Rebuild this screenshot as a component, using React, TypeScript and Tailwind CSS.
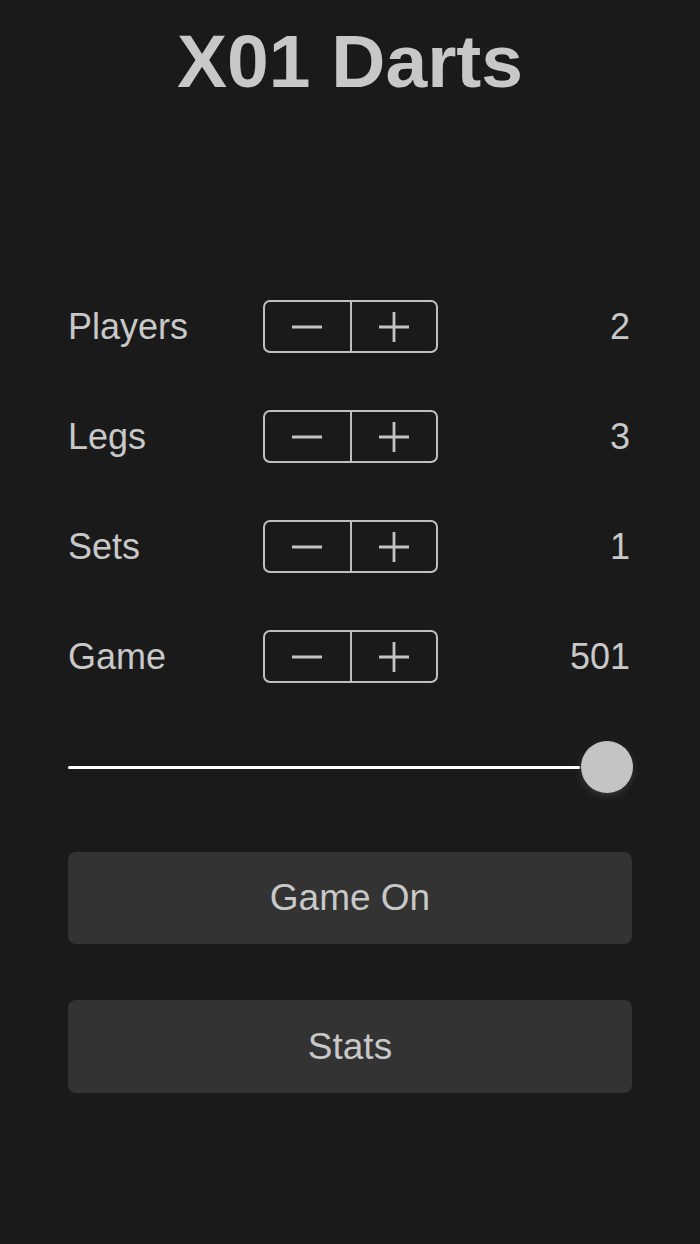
import React, { useState } from 'react';

const font = { fontFamily: '"Liberation Sans", Arial, Helvetica, sans-serif' };

const MinusIcon = () => (
  <svg width="32" height="32" viewBox="0 0 32 32" fill="none">
    <line x1="1" y1="16" x2="31" y2="16" stroke="#c4c4c4" strokeWidth="2.8" />
  </svg>
);

const PlusIcon = () => (
  <svg width="32" height="32" viewBox="0 0 32 32" fill="none">
    <line x1="1" y1="16" x2="31" y2="16" stroke="#c4c4c4" strokeWidth="2.8" />
    <line x1="16" y1="1" x2="16" y2="31" stroke="#c4c4c4" strokeWidth="2.8" />
  </svg>
);

const Stepper: React.FC<{ onDec: () => void; onInc: () => void }> = ({ onDec, onInc }) => (
  <div className="flex h-[53px] w-[175px] overflow-hidden rounded-[7px] border-2 border-[#bfbfbf]">
    <button onClick={onDec} className="flex flex-1 items-center justify-center">
      <MinusIcon />
    </button>
    <div className="w-[2px] bg-[#bfbfbf]" />
    <button onClick={onInc} className="flex flex-1 items-center justify-center">
      <PlusIcon />
    </button>
  </div>
);

const SettingRow: React.FC<{ label: string; value: number; onDec: () => void; onInc: () => void }> = ({
  label,
  value,
  onDec,
  onInc,
}) => (
  <div className="flex h-[53px] items-center">
    <div className="w-[195px] text-[36px] leading-none text-[#c8c8c8]">{label}</div>
    <Stepper onDec={onDec} onInc={onInc} />
    <div className="flex-1 text-right text-[36px] leading-none text-[#c8c8c8] pr-[2px]">{value}</div>
  </div>
);

export default function App() {
  const [players, setPlayers] = useState(2);
  const [legs, setLegs] = useState(3);
  const [sets, setSets] = useState(1);
  const [game, setGame] = useState(501);

  const clamp = (v: number, min: number, max: number) => Math.max(min, Math.min(max, v));
  const pct = ((game - 101) / 400) * 100;

  return (
    <div className="min-h-[1244px] w-full bg-[#1a1a1a]" style={font}>
      <h1 className="pt-[24px] text-center text-[75px] font-bold leading-none text-[#c8c8c8]">X01 Darts</h1>

      <div className="flex flex-col px-[68px] pt-[201px]">
        <div className="flex flex-col gap-[57px]">
          <SettingRow label="Players" value={players} onDec={() => setPlayers(clamp(players - 1, 1, 8))} onInc={() => setPlayers(clamp(players + 1, 1, 8))} />
          <SettingRow label="Legs" value={legs} onDec={() => setLegs(clamp(legs - 1, 1, 21))} onInc={() => setLegs(clamp(legs + 1, 1, 21))} />
          <SettingRow label="Sets" value={sets} onDec={() => setSets(clamp(sets - 1, 1, 13))} onInc={() => setSets(clamp(sets + 1, 1, 13))} />
          <SettingRow label="Game" value={game} onDec={() => setGame(clamp(game - 100, 101, 501))} onInc={() => setGame(clamp(game + 100, 101, 501))} />
        </div>

        {/* game slider */}
        <div className="mt-[58px] flex h-[52px] items-center">
          <div className="relative h-[52px] w-full">
            <div className="absolute left-0 right-[26px] top-[25px] h-[3px] rounded-full bg-[#3a3a3a]" />
            <div
              className="absolute left-0 top-[25px] h-[3px] rounded-full bg-white"
              style={{ width: `calc((100% - 52px) * ${pct / 100})` }}
            />
            <div
              className="absolute top-0 h-[52px] w-[52px] rounded-full bg-[#c4c4c4] shadow-[0_3px_8px_rgba(255,255,255,0.12)]"
              style={{ left: `calc((100% - 52px) * ${pct / 100} + 1px)` }}
            />
          </div>
        </div>

        <button className="mt-[59px] h-[92px] w-full rounded-[8px] bg-[#333333] text-[37px] text-[#c8c8c8]">
          Game On
        </button>
        <button className="mt-[56px] h-[93px] w-full rounded-[8px] bg-[#333333] text-[37px] text-[#c8c8c8]">
          Stats
        </button>
      </div>
    </div>
  );
}
